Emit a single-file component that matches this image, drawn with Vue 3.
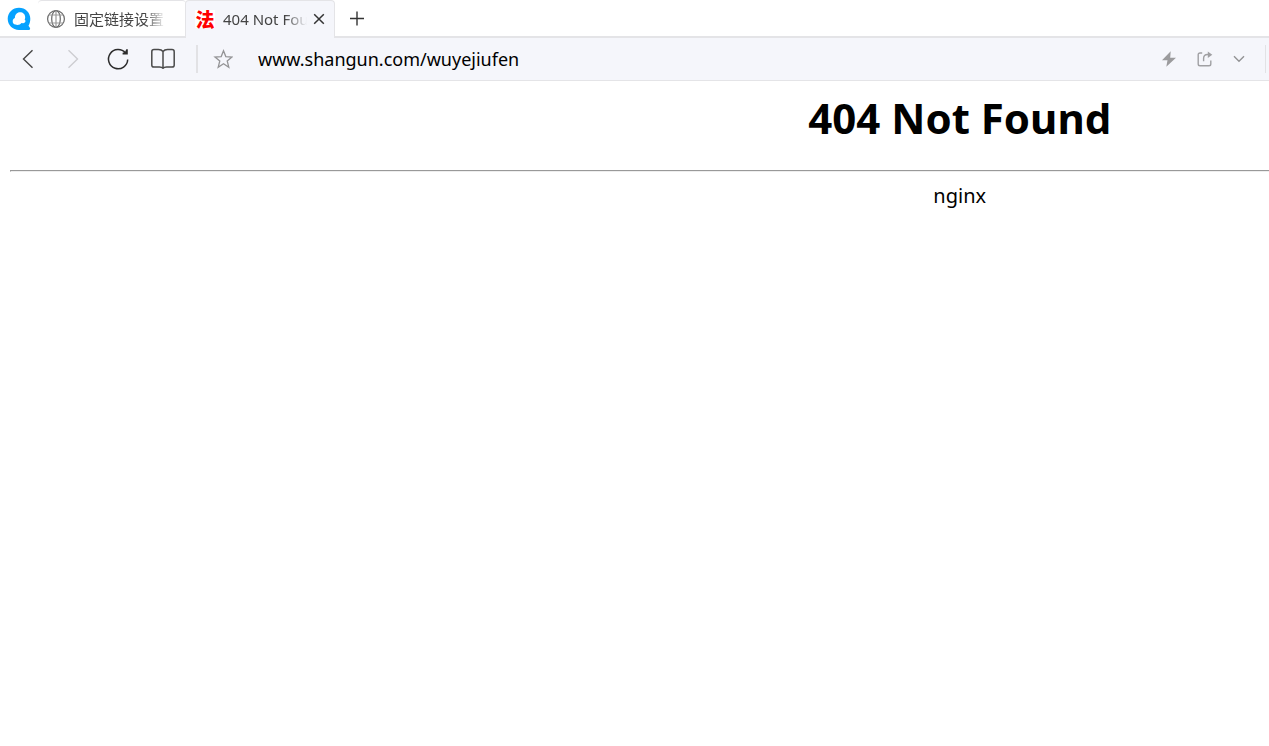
<script setup>
import { ref } from 'vue'

const address = ref('www.shangun.com/wuyejiufen')
</script>

<template>
  <div class="browser">
    <header class="tab-strip">
      <button class="logo" type="button" aria-label="QQ">
        <svg width="24" height="24" viewBox="0 0 24 24" aria-hidden="true">
          <path d="M12 0.700C5.700 0.700 0.700 5.500 0.700 11.800C0.700 18.200 5.700 23 12 23H21.900C23.200 23 23.500 21.600 22.700 20.600L21.500 18.700C22.700 16.800 23.300 14.500 23.300 11.800C23.300 5.500 18.400 0.700 12 0.700Z" fill="#06a2ff" />
          <path d="M13 5.300C16 5.300 18.200 7.400 18.200 10.200C18.200 11 18 11.800 17.600 12.500C18.500 13.200 18.700 14.200 18.200 15.100C17.800 15.900 17 16.300 16 16.200L14.500 16.100C13.600 17.300 12.200 18 10.400 18C9.700 18 9.100 17.900 8.500 17.600C6.700 17.300 5.600 15.900 5.700 14.200C5.700 12.700 6.600 11.500 7.900 11.100C7.800 7.800 9.900 5.300 13 5.300Z" fill="#fff" />
        </svg>
      </button>
      <div class="tab">
        <svg width="20" height="20" viewBox="0 0 20 20" fill="none" stroke="#686868" stroke-width="1.200" aria-hidden="true">
          <circle cx="10" cy="10" r="8.400" />
          <ellipse cx="10" cy="10" rx="4.300" ry="8.400" />
          <path d="M10 1.600V18.400M2.800 6H17.200M2.800 14H17.200" stroke="#999" />
        </svg>
        <span class="tab-title">固定链接设置</span>
      </div>
      <div class="tab active">
        <span class="favicon">法</span>
        <span class="tab-title">404 Not Found</span>
        <button class="close" type="button" aria-label="关闭标签页">
          <svg width="12" height="12" viewBox="0 0 12 12" fill="none" stroke="#333" stroke-width="1.500" aria-hidden="true">
            <path d="M1.200 1.200L10.800 10.800M10.800 1.200L1.200 10.800" />
          </svg>
        </button>
      </div>
      <button class="new-tab" type="button" aria-label="新建标签页">
        <svg width="16" height="16" viewBox="0 0 16 16" fill="none" stroke="#333" stroke-width="1.400" aria-hidden="true">
          <path d="M8 0.500V14.500M1 7.500H15" />
        </svg>
      </button>
    </header>

    <nav class="toolbar">
      <button class="tool" type="button" aria-label="后退">
        <svg width="24" height="24" viewBox="0 0 24 24" fill="none" stroke="#444" stroke-width="1.400" aria-hidden="true">
          <path d="M16.500 3.300L7.500 12L16.500 20.700" />
        </svg>
      </button>
      <button class="tool" type="button" aria-label="前进" disabled>
        <svg width="24" height="24" viewBox="0 0 24 24" fill="none" stroke="#cdcdd1" stroke-width="1.400" aria-hidden="true">
          <path d="M7.500 3.300L16.500 12L7.500 20.700" />
        </svg>
      </button>
      <button class="tool" type="button" aria-label="刷新">
        <svg width="24" height="24" viewBox="0 0 24 24" fill="none" stroke="#2c2c2c" stroke-width="1.500" aria-hidden="true">
          <path d="M21.700 12.500A9.600 9.600 0 1 1 19.500 6" />
          <path d="M21.800 2.200V7.400H16.600V5.800L19 5L20.300 2.200Z" fill="#2c2c2c" stroke="none" />
        </svg>
      </button>
      <button class="tool" type="button" aria-label="收藏夹">
        <svg width="24" height="24" viewBox="0 0 24 24" fill="none" stroke="#4a4a4a" stroke-width="1.500" stroke-linejoin="round" aria-hidden="true">
          <path d="M12 4.500C10.800 3 9.500 2.600 7.500 2.600H3C1.500 2.600 0.800 3.400 0.800 4.700V18.200C0.800 19.500 1.500 20 3 20H8.500C10.200 20 11.200 20.300 12 21.300C12.800 20.300 13.800 20 15.500 20H21C22.500 20 23.200 19.500 23.200 18.200V4.700C23.200 3.400 22.500 2.600 21 2.600H16.500C14.500 2.600 13.200 3 12 4.500ZM12 4.500V21" />
        </svg>
      </button>
      <span class="divider"></span>
      <button class="star" type="button" aria-label="添加收藏">
        <svg width="20" height="20" viewBox="0 0 20 20" fill="none" stroke="#949496" stroke-width="1.300" aria-hidden="true">
          <path d="M10.500 1.800L12.800 7.600L19 8L14.200 12L15.800 18.200L10.500 14.800L5.200 18.200L6.800 12L2 8L8.200 7.600Z" />
        </svg>
      </button>
      <input v-model="address" class="address" type="text" aria-label="地址栏" spellcheck="false" />
      <div class="actions">
        <button class="action" type="button" aria-label="极速模式">
          <svg width="16" height="16" viewBox="0 0 16 16" aria-hidden="true">
            <path d="M9.700 0.300L1 9.200H6.500L5.300 15.700L15 6.800H9.200Z" fill="#9b9b9d" />
          </svg>
        </button>
        <button class="action" type="button" aria-label="分享">
          <svg width="18" height="16" viewBox="0 0 18 16" fill="none" stroke="#a0a0a3" stroke-width="1.400" aria-hidden="true">
            <path d="M7.200 2H5C3.800 2 3.200 2.700 3.200 3.800V13C3.200 14.200 3.800 14.800 5 14.800H14C15.200 14.800 15.800 14.200 15.800 13V9.500" />
            <path d="M8.600 10.300V7.500C8.600 4.700 10 3.500 12.500 3.500H14" />
            <path d="M12.800 0.500L17.300 3.700L12.800 6.900Z" fill="#a0a0a3" stroke="none" />
          </svg>
        </button>
        <button class="action" type="button" aria-label="更多">
          <svg width="16" height="16" viewBox="0 0 16 16" fill="none" stroke="#929294" stroke-width="1.400" aria-hidden="true">
            <path d="M3 5.300L8 10.300L13 5.300" />
          </svg>
        </button>
      </div>
      <span class="edge"></span>
    </nav>

    <main class="viewport">
      <div class="document">
        <h1>404 Not Found</h1>
        <hr />
        <p>nginx</p>
      </div>
    </main>
  </div>
</template>

<style>
body {
  margin: 0;
  background: #fff;
}
</style>

<style scoped>
.browser {
  min-height: 100vh;
  overflow: hidden;
  color: #000;
  font-family: "Noto Sans", "Noto Sans CJK SC", sans-serif;
}

button {
  display: flex;
  align-items: center;
  justify-content: center;
  padding: 0;
  border: 0;
  background: transparent;
}

svg {
  display: block;
  flex: none;
}

.tab-strip {
  display: flex;
  height: 38px;
  background: linear-gradient(#e4e4e7, #e4e4e7) bottom / 100% 2px no-repeat #fff;
}

.logo {
  width: 38px;
  height: 38px;
}

.tab {
  display: flex;
  align-items: center;
  box-sizing: border-box;
  width: 148px;
  height: 38px;
  padding: 0 8px 2px;
  border-top: 1px solid #e4e4e7;
  border-radius: 4px 4px 0 0;
  color: #444;
  font-size: 15px;
  line-height: 20px;
}

.tab-title {
  flex: 1;
  min-width: 0;
  max-width: 92px;
  margin-left: 8px;
  overflow: hidden;
  white-space: nowrap;
  mask-image: linear-gradient(to right, #000 calc(100% - 22px), transparent);
}

.tab.active {
  width: 150px;
  margin-left: -1px;
  padding: 0 7px 2px 9px;
  border-right: 1px solid #e4e4e7;
  border-left: 1px solid #e4e4e7;
  background: #f5f6fb;
}

.favicon {
  width: 20px;
  background: #fff;
  color: #f00;
  font-family: "Noto Sans CJK SC", sans-serif;
  font-size: 19px;
  font-weight: 900;
  line-height: 18px;
  text-align: center;
}

.close {
  width: 16px;
  height: 20px;
  margin-left: 4px;
}

.new-tab {
  width: 44px;
  height: 38px;
}

.toolbar {
  display: flex;
  align-items: center;
  height: 42px;
  padding-left: 5px;
  border-bottom: 1px solid #e4e4e7;
  background: #f5f6fb;
}

.tool {
  width: 45px;
  height: 40px;
}

.divider {
  width: 2px;
  height: 28px;
  margin-left: 11px;
  background: #e2e2e5;
}

.star {
  width: 20px;
  height: 40px;
  margin-left: 15px;
}

.address {
  flex: 1;
  min-width: 0;
  height: 32px;
  margin-left: 25px;
  padding: 0;
  border: 0;
  outline: 0;
  background: transparent;
  color: #000;
  font-family: inherit;
  font-size: 18px;
}

.actions {
  display: flex;
}

.action {
  width: 35px;
  height: 40px;
}

.edge {
  width: 1px;
  height: 28px;
  margin: 0 3px 0 9px;
  background: #e2e2e5;
}

.document {
  width: calc(150% - 4px);
  margin-left: 10px;
  text-align: center;
}

h1 {
  margin: 0;
  padding: 9px 0 24px;
  font-size: 42px;
  font-weight: 700;
  line-height: 56px;
}

hr {
  height: 0;
  margin: 0;
  border: 1px solid;
  border-color: #999 #eee #eee #999;
}

p {
  margin: 0;
  padding-top: 10px;
  font-size: 20px;
  line-height: 28px;
}
</style>
